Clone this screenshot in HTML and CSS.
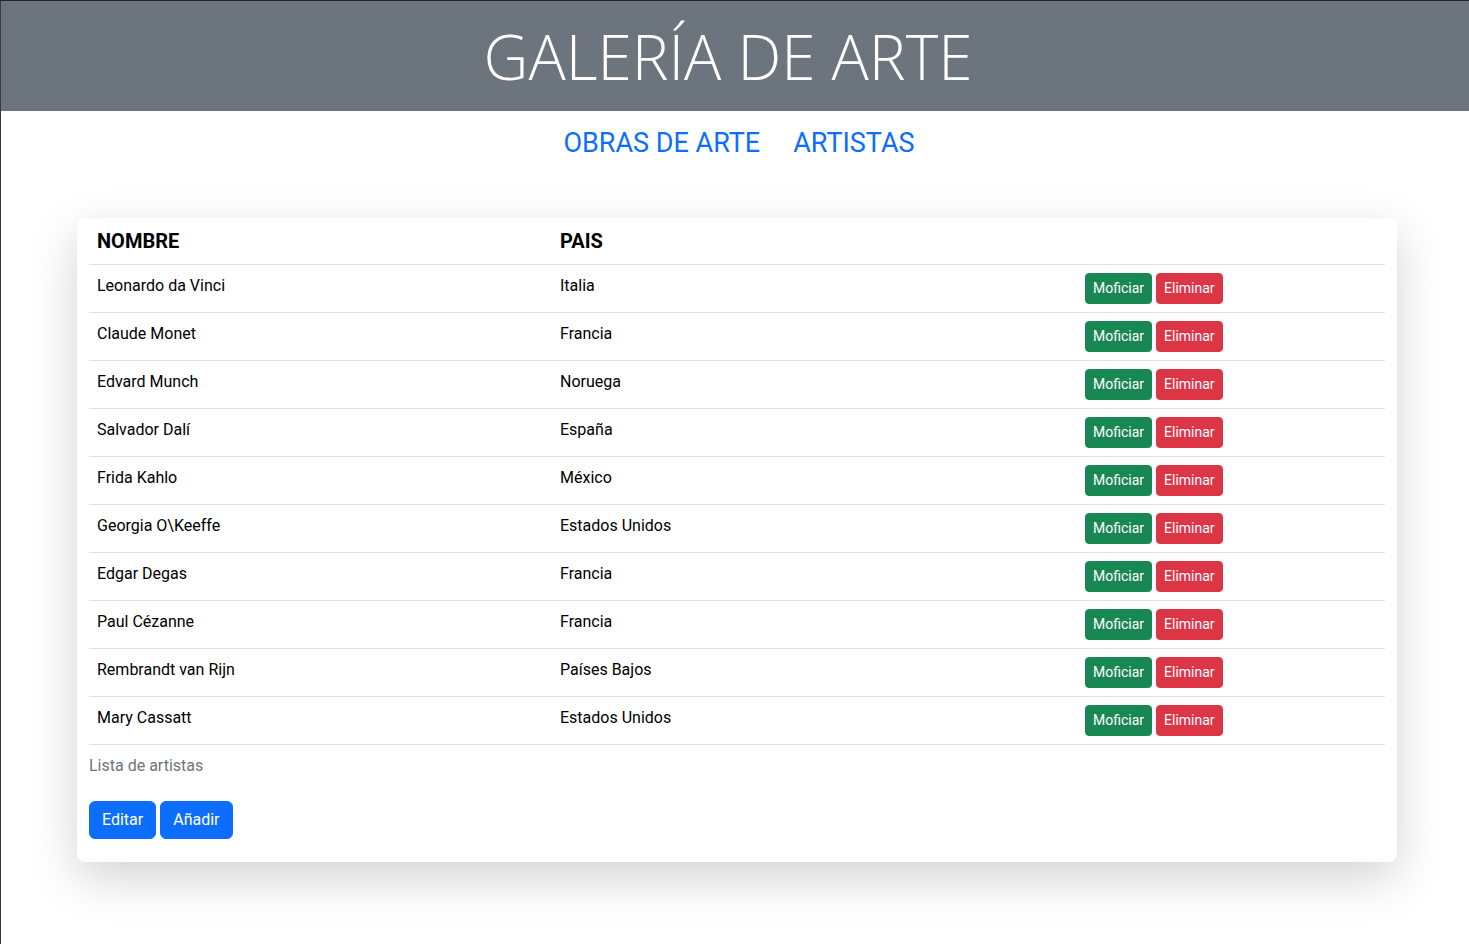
FILE: index.html
```html
<!DOCTYPE html>
<html lang="es">
<head>
<meta charset="utf-8">
<title>Galería de Arte</title>
<link rel="stylesheet" href="styles.css">
</head>
<body>
<div class="page">
  <header class="banner">
    <h1 class="banner-title">GALERÍA DE ARTE</h1>
  </header>
  <nav class="nav">
    <a class="nav-link" href="#">OBRAS DE ARTE</a>
    <a class="nav-link" href="#">ARTISTAS</a>
  </nav>
  <main class="card">
    <table class="table">
      <caption class="table-caption">Lista de artistas</caption>
      <thead>
        <tr>
          <th class="col-name">NOMBRE</th>
          <th class="col-country">PAIS</th>
          <th class="col-actions"></th>
        </tr>
      </thead>
      <tbody>
        <tr><td>Leonardo da Vinci</td><td>Italia</td><td class="cell-actions"><button class="btn btn-sm btn-green">Moficiar</button> <button class="btn btn-sm btn-red">Eliminar</button></td></tr>
        <tr><td>Claude Monet</td><td>Francia</td><td class="cell-actions"><button class="btn btn-sm btn-green">Moficiar</button> <button class="btn btn-sm btn-red">Eliminar</button></td></tr>
        <tr><td>Edvard Munch</td><td>Noruega</td><td class="cell-actions"><button class="btn btn-sm btn-green">Moficiar</button> <button class="btn btn-sm btn-red">Eliminar</button></td></tr>
        <tr><td>Salvador Dalí</td><td>España</td><td class="cell-actions"><button class="btn btn-sm btn-green">Moficiar</button> <button class="btn btn-sm btn-red">Eliminar</button></td></tr>
        <tr><td>Frida Kahlo</td><td>México</td><td class="cell-actions"><button class="btn btn-sm btn-green">Moficiar</button> <button class="btn btn-sm btn-red">Eliminar</button></td></tr>
        <tr><td>Georgia O\Keeffe</td><td>Estados Unidos</td><td class="cell-actions"><button class="btn btn-sm btn-green">Moficiar</button> <button class="btn btn-sm btn-red">Eliminar</button></td></tr>
        <tr><td>Edgar Degas</td><td>Francia</td><td class="cell-actions"><button class="btn btn-sm btn-green">Moficiar</button> <button class="btn btn-sm btn-red">Eliminar</button></td></tr>
        <tr><td>Paul Cézanne</td><td>Francia</td><td class="cell-actions"><button class="btn btn-sm btn-green">Moficiar</button> <button class="btn btn-sm btn-red">Eliminar</button></td></tr>
        <tr><td>Rembrandt van Rijn</td><td>Países Bajos</td><td class="cell-actions"><button class="btn btn-sm btn-green">Moficiar</button> <button class="btn btn-sm btn-red">Eliminar</button></td></tr>
        <tr><td>Mary Cassatt</td><td>Estados Unidos</td><td class="cell-actions"><button class="btn btn-sm btn-green">Moficiar</button> <button class="btn btn-sm btn-red">Eliminar</button></td></tr>
      </tbody>
    </table>
    <div class="actions">
      <button class="btn btn-blue">Editar</button>
      <button class="btn btn-blue">Añadir</button>
    </div>
  </main>
</div>
</body>
</html>
```
FILE: styles.css
```css
* { box-sizing: border-box; }

html, body {
  margin: 0;
  padding: 0;
  background: #ffffff;
}

body {
  font-family: "Segoe UI", Roboto, "Noto Sans", "Liberation Sans", sans-serif;
  font-size: 16px;
  line-height: 1.5;
  color: #212529;
}

.page {
  min-height: 944px;
  border-top: 1px solid #222;
  border-left: 1px solid #3a3a3a;
}

.banner {
  background: #6c757d;
  height: 110px;
  display: flex;
  align-items: center;
  justify-content: center;
}

.banner-title {
  margin: 0;
  font-family: "Open Sans", "Noto Sans", sans-serif;
  font-weight: 300;
  font-size: 62px;
  line-height: 1;
  color: #ffffff;
  transform: translateX(-7px);
}

.nav {
  display: flex;
  justify-content: center;
  gap: 33px;
  padding-top: 12px;
  height: 107px;
  padding-left: 8px;
}

.nav-link {
  color: #0d6efd;
  text-decoration: none;
  font-size: 27px;
  line-height: 40px;
}

.card {
  width: 1320px;
  margin-left: calc(50% - 658px);
  background: #fff;
  border-radius: 8px;
  box-shadow: 0 16px 48px rgba(0, 0, 0, 0.175);
  padding: 0 12px 23px;
}

.table {
  width: 100%;
  border-collapse: collapse;
  margin-bottom: 16px;
  color: #000;
}

.table th,
.table td {
  text-align: left;
  vertical-align: top;
  padding: 9px 8px 8px;
  border-bottom: 1px solid #dee2e6;
}

.table th {
  font-size: 20px;
  line-height: 30px;
  font-weight: 700;
  color: #000;
  padding: 8px 8px 8px;
}

.table td {
  font-size: 16px;
  line-height: 24px;
}

.table td.cell-actions {
  padding: 8px 8px;
}

.col-name { width: 463px; }
.col-country { width: 525px; }

.table-caption {
  caption-side: bottom;
  text-align: left;
  color: #6c757d;
  padding: 9px 0 7px;
  line-height: 24px;
}

.btn {
  font-family: inherit;
  display: inline-block;
  border: 1px solid transparent;
  color: #fff;
  cursor: pointer;
  font-size: 16px;
  line-height: 24px;
  padding: 6px 12px;
  border-radius: 6px;
}

.btn-sm {
  font-size: 14px;
  line-height: 21px;
  padding: 4px 7px;
  border-radius: 4px;
}

.btn-green { background: #198754; border-color: #198754; }
.btn-red { background: #dc3545; border-color: #dc3545; }
.btn-blue { background: #0d6efd; border-color: #0d6efd; }

.actions {
  display: flex;
  gap: 4px;
}
```
